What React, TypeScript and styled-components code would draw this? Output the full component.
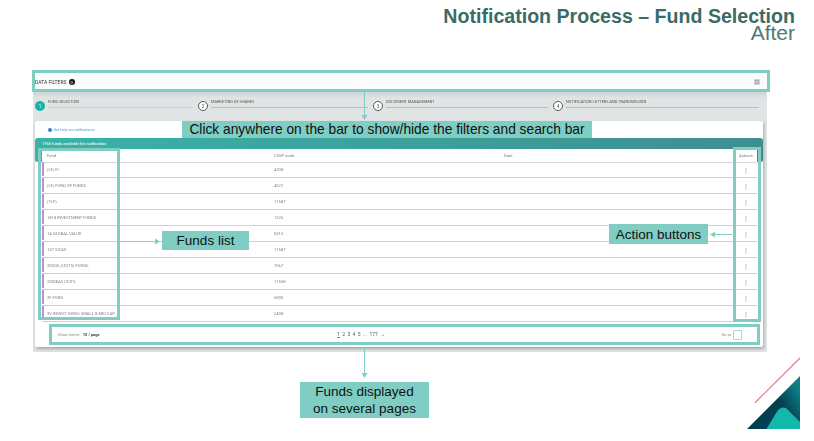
import React from "react";
import styled, { createGlobalStyle } from "styled-components";

const TEAL = "#7fcdc3";

const Global = createGlobalStyle`
  html, body { margin: 0; padding: 0; background: #fff; }
  body { font-family: "Liberation Sans", Arial, sans-serif; }
`;

const Slide = styled.div`
  position: relative;
  width: 814px;
  height: 441px;
  overflow: hidden;
  background: #fff;
`;

const Heading = styled.header`
  height: 70px;
  box-sizing: border-box;
  padding: 8px 19px 0 0;
  text-align: right;
  color: #3a6b66;
`;

const Title = styled.h1`
  margin: 0;
  font-size: 19.6px;
  line-height: 17px;
  font-weight: 700;
`;

const Subtitle = styled.div`
  margin-top: 1px;
  font-size: 21px;
  line-height: 14px;
  color: #4a7a75;
`;

const Capture = styled.section`
  width: 738px;
  margin-left: 32px;
`;

const FilterBar = styled.div`
  display: flex;
  align-items: center;
  justify-content: space-between;
  box-sizing: border-box;
  height: 22px;
  padding: 2px 7px 0 0;
  border: 3px solid ${TEAL};
  background: #fbfcfb;
  font-family: Roboto, "Liberation Sans", sans-serif;
  font-size: 5px;
  color: #333;
`;

const FilterLabel = styled.span`
  display: flex;
  align-items: center;
  gap: 2px;
  filter: blur(0.3px);
`;

const CountBadge = styled.span`
  display: inline-flex;
  align-items: center;
  justify-content: center;
  width: 6px;
  height: 6px;
  border-radius: 50%;
  background: #151515;
  color: #fff;
  font-size: 4px;
`;

const Panel = styled.div`
  box-sizing: border-box;
  width: 734px;
  height: 260px;
  margin-left: 1px;
  padding: 8px 3px 0 2px;
  background: linear-gradient(#cfd3d4, #e1e4e5 6px);
  font-family: Roboto, "Liberation Sans", sans-serif;
`;

const Stepper = styled.ol`
  display: flex;
  height: 21px;
  margin: 0;
  padding: 0;
  list-style: none;
  filter: blur(0.3px);
`;

const Step = styled.li<{ $w: number }>`
  display: flex;
  gap: 3px;
  width: ${(p) => p.$w}px;
  box-sizing: border-box;
  padding-right: 5px;
`;

const StepDot = styled.span<{ $on?: boolean }>`
  flex: none;
  display: flex;
  align-items: center;
  justify-content: center;
  box-sizing: border-box;
  width: 10px;
  height: 10px;
  margin-top: 1px;
  border-radius: 50%;
  font-size: 4.5px;
  color: ${(p) => (p.$on ? "#fff" : "#444")};
  background: ${(p) => (p.$on ? "#13b5a8" : "#fff")};
  border: ${(p) => (p.$on ? "0" : "0.8px solid #555")};
`;

const StepBody = styled.div`
  flex: 1;
  margin-top: -1px;
`;

const StepLabel = styled.div`
  height: 6px;
  font-size: 3.9px;
  line-height: 6px;
  color: #555;
  white-space: nowrap;
`;

const StepRail = styled.div<{ $on?: boolean }>`
  height: 1px;
  margin-top: 1.5px;
  background: ${(p) => (p.$on ? "#a5dcd6" : "#b9bdbe")};
`;

const Card = styled.div`
  width: 728px;
  height: 226px;
  border-radius: 2px;
  background: #fff;
  box-shadow: 1px 2px 3px rgba(90, 100, 100, 0.45);
  filter: blur(0.3px);
`;

const HelpRow = styled.div`
  display: flex;
  align-items: center;
  gap: 1.5px;
  height: 17px;
  padding-left: 13px;
  font-size: 3.8px;
  color: #4f9fd0;
`;

const HelpDot = styled.span`
  width: 4px;
  height: 4px;
  border-radius: 50%;
  background: #2f86c4;
`;

const TableBand = styled.div`
  height: 24px;
  border-radius: 3px 3px 2px 2px;
  background: linear-gradient(90deg, #38b3a7, #3f8f90);
`;

const BandTitle = styled.div`
  height: 11px;
  padding-left: 7px;
  font-size: 4px;
  line-height: 11px;
  font-weight: 500;
  color: #e8f7f5;
`;

const columns = "232px 230px 1fr 22px";

const HeadRow = styled.div`
  display: grid;
  grid-template-columns: ${columns};
  align-items: center;
  height: 13px;
  margin: 0 6px 0 7px;
  background: #fff;
  box-shadow: 0 1px 1px rgba(0, 0, 0, 0.15);
  font-size: 4.1px;
  color: #777;
`;

const HeadCell = styled.span<{ $first?: boolean; $center?: boolean }>`
  padding-left: ${(p) => (p.$first ? "5px" : "0")};
  text-align: ${(p) => (p.$center ? "center" : "left")};
`;

const Rows = styled.div`
  margin: 0 6px 0 7px;
`;

const Row = styled.div`
  display: grid;
  grid-template-columns: ${columns};
  align-items: center;
  box-sizing: border-box;
  height: 16px;
  border-bottom: 1px solid #cdd0d0;
  font-size: 4.1px;
  color: #808080;
`;

const FundCell = styled.span`
  align-self: stretch;
  display: flex;
  align-items: center;
  margin-bottom: 1px;
  padding-left: 3px;
  border-left: 2px solid #c58be0;
  white-space: nowrap;
`;

const Kebab = styled.span`
  text-align: center;
  font-size: 6px;
  font-weight: 700;
  color: #a5a5a5;
`;

const Footer = styled.div`
  display: flex;
  align-items: center;
  box-sizing: border-box;
  height: 21px;
  margin: 2px 3px 0 14px;
  padding: 0 15px 0 6px;
  border: 3px solid ${TEAL};
  background: #fff;
  font-size: 4px;
  color: #888;
`;

const ShowItems = styled.span`
  width: 279px;
  flex: none;
`;

const Strong = styled.b`
  color: #445;
  margin-left: 2px;
`;

const Pages = styled.span`
  display: flex;
  gap: 2.4px;
  flex: 1;
  font-size: 5px;
  color: #556;
`;

const PageCurrent = styled.span`
  border-bottom: 0.7px solid #13b5a8;
`;

const GoTo = styled.span`
  display: flex;
  align-items: center;
  gap: 2px;
`;

const GoInput = styled.span`
  display: block;
  box-sizing: border-box;
  width: 9px;
  height: 10px;
  border: 1px solid #a5dcd6;
  border-radius: 1px;
`;

const Outline = styled.div<{ $x: number; $y: number; $w: number; $h: number }>`
  position: absolute;
  left: ${(p) => p.$x}px;
  top: ${(p) => p.$y}px;
  width: ${(p) => p.$w}px;
  height: ${(p) => p.$h}px;
  box-sizing: border-box;
  border: 3px solid ${TEAL};
`;

const Callout = styled.div<{ $x: number; $y: number; $w: number; $h: number; $size?: number }>`
  position: absolute;
  left: ${(p) => p.$x}px;
  top: ${(p) => p.$y}px;
  width: ${(p) => p.$w}px;
  height: ${(p) => p.$h}px;
  display: flex;
  align-items: center;
  justify-content: center;
  text-align: center;
  background: ${TEAL};
  color: #111;
  font-size: ${(p) => p.$size ?? 13.5}px;
  line-height: 17px;
`;

const Overlay = styled.svg`
  position: absolute;
  left: 0;
  top: 0;
  pointer-events: none;
`;

const steps = [
  { n: 1, w: 163, label: "FUND SELECTION", on: true },
  { n: 2, w: 175, label: "MARKETING OF SHARES" },
  { n: 3, w: 180, label: "DOCUMENT MANAGEMENT" },
  { n: 4, w: 211, label: "NOTIFICATION LETTERS AND TRANSMISSION" },
];

const funds: [string, string][] = [
  ["(LF) FI", "4208"],
  ["(LF) FUND OF FUNDS", "4522"],
  ["(TLF)", "11587"],
  ["1818 INVESTMENT FUNDS", "1226"],
  ["1A GLOBAL VALUE", "5515"],
  ["1ST SICAV", "11587"],
  ["20UGS (UCITS) FUNDS", "7567"],
  ["2XIDEAS UCITS", "11558"],
  ["2F FUND", "6500"],
  ["3V INVEST SWISS SMALL & MID CAP", "2408"],
];

export default function App() {
  return (
    <Slide>
      <Global />
      <Heading>
        <Title>Notification Process – Fund Selection</Title>
        <Subtitle>After</Subtitle>
      </Heading>
      <Capture>
        <FilterBar>
          <FilterLabel>
            DATA FILTERS <CountBadge>0</CountBadge>
          </FilterLabel>
          <svg width="6" height="6" viewBox="0 0 6 6">
            <rect width="6" height="6" fill="#d3d6d6" />
            <path d="M1 1.5h1.6M1 3h1.6M1 4.5h1.6M3.6 1.5h1.4M3.6 3h1.4M3.6 4.5h1.4" stroke="#777" strokeWidth="0.6" />
          </svg>
        </FilterBar>
        <Panel>
          <Stepper>
            {steps.map((s) => (
              <Step key={s.n} $w={s.w}>
                <StepDot $on={s.on}>{s.n}</StepDot>
                <StepBody>
                  <StepLabel>{s.label}</StepLabel>
                  <StepRail $on={s.on} />
                </StepBody>
              </Step>
            ))}
          </Stepper>
          <Card>
            <HelpRow>
              <HelpDot />
              Get help on notifications
            </HelpRow>
            <TableBand>
              <BandTitle>1766 funds available for notification</BandTitle>
              <HeadRow>
                <HeadCell $first>Fund</HeadCell>
                <HeadCell>CSSP code</HeadCell>
                <HeadCell>Date</HeadCell>
                <HeadCell $center>Actions</HeadCell>
              </HeadRow>
            </TableBand>
            <Rows>
              {funds.map(([name, code]) => (
                <Row key={name}>
                  <FundCell>{name}</FundCell>
                  <span>{code}</span>
                  <span />
                  <Kebab>⋮</Kebab>
                </Row>
              ))}
            </Rows>
            <Footer>
              <ShowItems>
                Show items: <Strong>10 / page</Strong>
              </ShowItems>
              <Pages>
                <PageCurrent>1</PageCurrent>
                <span>2</span>
                <span>3</span>
                <span>4</span>
                <span>5</span>
                <span>...</span>
                <span>177</span>
                <span>→</span>
              </Pages>
              <GoTo>
                Go to <GoInput />
              </GoTo>
            </Footer>
          </Card>
        </Panel>
      </Capture>

      <Outline $x={38} $y={148} $w={82} $h={172} />
      <Outline $x={733} $y={147} $w={28} $h={175} />

      <Callout $x={182} $y={121} $w={410} $h={17} $size={13.75}>
        Click anywhere on the bar to show/hide the filters and search bar
      </Callout>
      <Callout $x={162} $y={231} $w={87} $h={19}>Funds list</Callout>
      <Callout $x={609} $y={224} $w={99} $h={20}>Action buttons</Callout>
      <Callout $x={300} $y={382} $w={129} $h={36}>
        Funds displayed
        <br />
        on several pages
      </Callout>

      <Overlay width="814" height="441" viewBox="0 0 814 441">
        <g stroke={TEAL} strokeWidth="1" fill={TEAL}>
          <path d="M364.5 92V116" />
          <path d="M361.5 115h6l-3 5z" stroke="none" />
          <path d="M120 241.5H156" />
          <path d="M155 238.5v6l5-3z" stroke="none" />
          <path d="M714 234.5H732" />
          <path d="M715 231.5v6l-5-3z" stroke="none" />
          <path d="M364.5 348V374" />
          <path d="M361.5 373h6l-3 5z" stroke="none" />
        </g>
        <defs>
          <linearGradient id="darkWedge" x1="0.2" y1="0.8" x2="1" y2="0.3">
            <stop offset="0.55" stopColor="#033f52" />
            <stop offset="1" stopColor="#0f8085" />
          </linearGradient>
        </defs>
        <path d="M755 402.700L800 358" stroke="#f0708a" strokeWidth="1.2" fill="none" />
        <path d="M747 429L800 376V429Z" fill="url(#darkWedge)" />
        <path d="M766.500 429L777 411.500Q781 406 786 408L800 422V429Z" fill="#12b8a8" />
      </Overlay>
    </Slide>
  );
}
